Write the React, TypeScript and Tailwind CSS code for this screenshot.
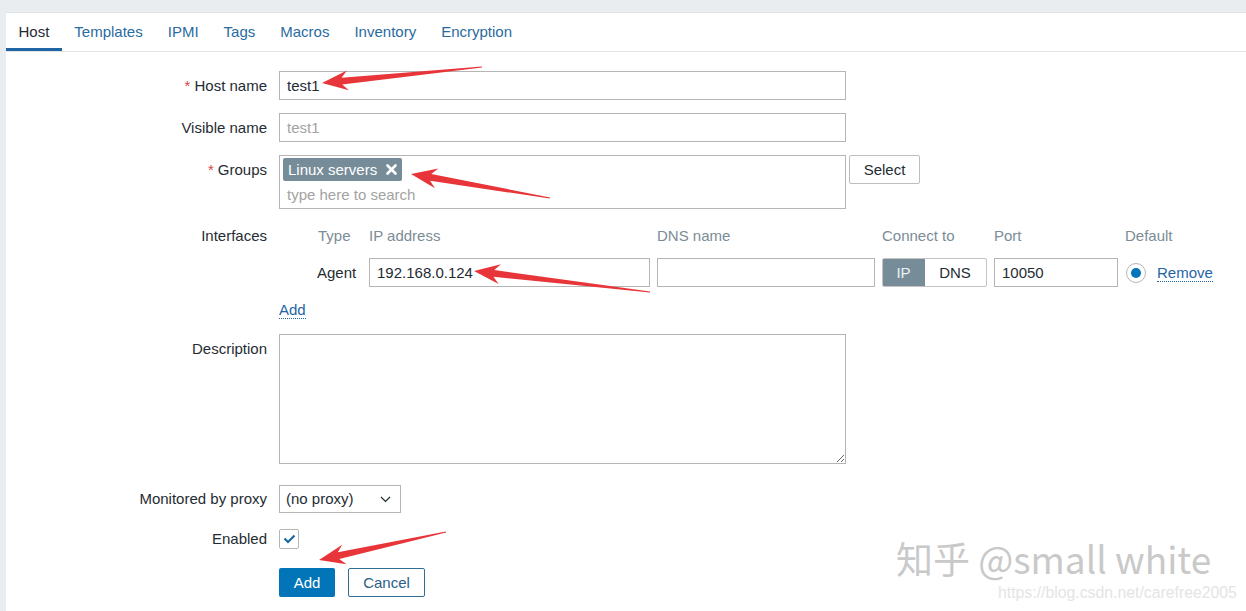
import React from 'react';

type Pt = [number, number];

const arrowPoints = (tip: Pt, tail: Pt) => {
  const dx = tail[0] - tip[0];
  const dy = tail[1] - tip[1];
  const len = Math.hypot(dx, dy);
  const ux = dx / len;
  const uy = dy / len;
  const nx = -uy;
  const ny = ux;
  const at = (d: number, w: number): Pt => [tip[0] + ux * d + nx * w, tip[1] + uy * d + ny * w];
  const pts: Pt[] = [
    tip,
    at(26, 10),
    at(20, 3.4),
    [tail[0] + nx * 0.6, tail[1] + ny * 0.6],
    [tail[0] - nx * 0.6, tail[1] - ny * 0.6],
    at(20, -3.4),
    at(26, -10),
  ];
  return pts.map((p) => p.join(',')).join(' ');
};

const arrows: [Pt, Pt][] = [
  [[322, 83], [482, 67]],
  [[411, 174], [550, 198]],
  [[474, 271], [650, 292]],
  [[319, 560], [446, 532]],
];

const tabs = ['Host', 'Templates', 'IPMI', 'Tags', 'Macros', 'Inventory', 'Encryption'];

const Label: React.FC<{ text: string; required?: boolean; h?: string }> = ({ text, required, h = 'h-[29px]' }) => (
  <div className={`w-[261px] shrink-0 ${h} flex items-center justify-end text-[#1f2c33]`}>
    {required && <span className="text-[#d64541] mr-[4px]">*</span>}
    {text}
  </div>
);

const inputCls =
  'h-[29px] border border-[#b5b5b5] bg-white px-[7px] text-[15px] text-[#1f2c33] outline-none placeholder:text-[#a3a3a3]';

export default function App() {
  return (
    <div
      className="relative w-[1246px] h-[611px] overflow-hidden bg-[#e9edf0] pt-[12px] pl-[6px] text-[15px] leading-[20px]"
      style={{ fontFamily: '"Liberation Sans", Arial, sans-serif' }}
    >
      <div className="h-full bg-white border-t border-[#dde3e7]">
        {/* tabs */}
        <div className="flex h-[39px] border-b border-[#e4e4e4]">
          {tabs.map((t, i) => (
            <div
              key={t}
              className={`px-[12.5px] flex items-center ${
                i === 0 ? 'text-[#1f2c33] border-b-[3px] border-[#1f65a6] pt-[2px]' : 'text-[#2a6ba0] pb-[1px]'
              }`}
            >
              {t}
            </div>
          ))}
        </div>

        {/* form */}
        <div className="pt-[19px] flex flex-col">
          <div className="flex gap-[12px]">
            <Label text="Host name" required />
            <input className={`${inputCls} w-[567px]`} value="test1" readOnly />
          </div>

          <div className="flex gap-[12px] mt-[13px]">
            <Label text="Visible name" />
            <input className={`${inputCls} w-[567px]`} placeholder="test1" readOnly />
          </div>

          <div className="flex gap-[12px] mt-[13px]">
            <Label text="Groups" required />
            <div className="w-[567px] h-[54px] border border-[#b5b5b5] px-[3px] pt-[2px]">
              <div className="inline-flex items-center h-[23px] rounded-[2px] bg-[#768d99] pl-[5px] pr-[5px] text-white">
                Linux servers
                <svg className="ml-[9px]" width="11" height="11" viewBox="0 0 11 11">
                  <path d="M1.5 1.5L9.5 9.5M9.5 1.5L1.5 9.5" stroke="#fff" strokeWidth="2.6" strokeLinecap="round" />
                </svg>
              </div>
              <div className="pl-[4px] mt-[2px] text-[#a3a3a3] leading-[24px]">type here to search</div>
            </div>
            <button className="-ml-[9px] w-[71px] h-[29px] border border-[#bdbdbd] rounded-[2px] bg-white text-[#1f2c33]">
              Select
            </button>
          </div>

          <div className="flex gap-[12px] mt-[17px]">
            <Label text="Interfaces" h="h-[20px]" />
            <div className="ml-[39px] grid grid-cols-[44px_281px_218px_105px_124px_auto] gap-x-[7px] gap-y-[12px] items-center">
              <div className="h-[20px] flex items-center text-[#7b8c96]">Type</div>
              <div className="h-[20px] text-[#7b8c96]">IP address</div>
              <div className="h-[20px] text-[#7b8c96]">DNS name</div>
              <div className="h-[20px] text-[#7b8c96]">Connect to</div>
              <div className="h-[20px] text-[#7b8c96]">Port</div>
              <div className="h-[20px] text-[#7b8c96]">Default</div>

              <div className="text-[#1f2c33] -ml-[1px]">Agent</div>
              <input className={`${inputCls} w-[281px]`} value="192.168.0.124" readOnly />
              <input className={`${inputCls} w-[218px]`} value="" readOnly />
              <div className="flex h-[29px] w-[105px] border border-[#c4c4c4] rounded-[2px] overflow-hidden">
                <div className="w-[43px] -m-[1px] bg-[#768d99] text-[#eef2f4] flex items-center justify-center rounded-l-[2px]">IP</div>
                <div className="flex-1 flex items-center justify-center text-[#1f2c33]">DNS</div>
              </div>
              <input className={`${inputCls} w-[124px]`} value="10050" readOnly />
              <div className="flex items-center">
                <div className="w-[20px] h-[20px] ml-[1px] rounded-full border border-[#b5b5b5] flex items-center justify-center">
                  <div className="w-[10px] h-[10px] rounded-full bg-[#0275b8]" />
                </div>
                <span className="ml-[11px] text-[#1f65a6] border-b border-dotted border-[#1f65a6] leading-[17px] mt-[1px]">
                  Remove
                </span>
              </div>
            </div>
          </div>

          <div className="flex gap-[12px] mt-[12px]">
            <div className="w-[261px] shrink-0" />
            <div className="h-[20px] flex items-center">
              <span className="text-[#1f65a6] border-b border-dotted border-[#1f65a6] leading-[17px] mt-[2px]">Add</span>
            </div>
          </div>

          <div className="flex gap-[12px] mt-[15px]">
            <Label text="Description" />
            <textarea className="w-[567px] h-[130px] border border-[#b5b5b5] outline-none" readOnly />
          </div>

          <div className="flex gap-[12px] mt-[21px]">
            <Label text="Monitored by proxy" h="h-[28px]" />
            <div className="w-[122px] h-[28px] border border-[#b5b5b5] flex items-center justify-between pl-[6px] pr-[9px] text-[#1f2c33]">
              (no proxy)
              <svg width="11" height="7" viewBox="0 0 11 7">
                <path d="M1 1L5.5 5.5L10 1" stroke="#1f2c33" strokeWidth="1.2" fill="none" />
              </svg>
            </div>
          </div>

          <div className="flex gap-[12px] mt-[16px]">
            <Label text="Enabled" h="h-[20px]" />
            <div className="w-[20px] h-[20px] border border-[#b5b5b5] rounded-[2px] flex items-center justify-center">
              <svg width="13" height="10" viewBox="0 0 13 10">
                <path d="M1.5 4.5L5 8L11.5 1.5" stroke="#1a6aa0" strokeWidth="2.2" fill="none" />
              </svg>
            </div>
          </div>

          <div className="flex gap-[12px] mt-[19px]">
            <div className="w-[261px] shrink-0" />
            <div className="flex gap-[13px]">
              <button className="w-[56px] h-[29px] rounded-[2px] bg-[#0275b8] text-white">Add</button>
              <button className="w-[77px] h-[29px] rounded-[2px] border border-[#2f6f96] bg-white text-[#2a6088]">Cancel</button>
            </div>
          </div>
        </div>
      </div>

      {/* watermark */}
      <div className="absolute left-[896px] top-[536px] text-[37px] leading-[44px] text-[#c9c9c9] whitespace-nowrap" style={{ fontFamily: '"Noto Sans CJK SC", "Noto Sans", sans-serif' }}>
        知乎 @small white
      </div>
      <div className="absolute left-[998px] top-[583px] text-[15.8px] text-[#e4e4e4] whitespace-nowrap">
        https://blog.csdn.net/carefree2005
      </div>

      {/* annotation arrows */}
      <svg className="absolute inset-0 pointer-events-none" width="1246" height="611">
        {arrows.map(([tip, tail], i) => (
          <polygon key={i} points={arrowPoints(tip, tail)} fill="#e8353a" />
        ))}
      </svg>
    </div>
  );
}
